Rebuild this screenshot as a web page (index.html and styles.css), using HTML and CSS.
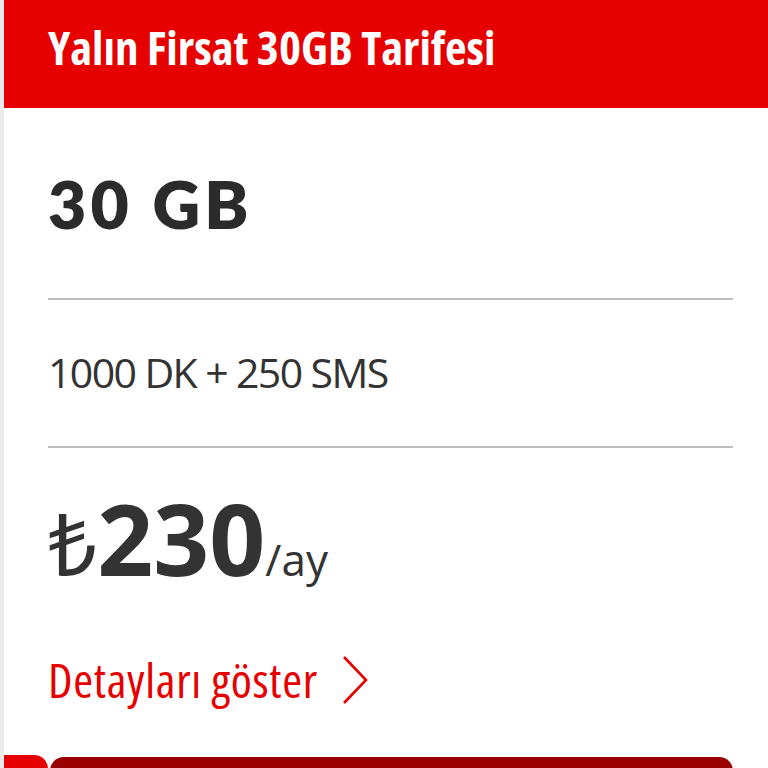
FILE: index.html
```html
<!DOCTYPE html>
<html lang="tr">
<head>
<meta charset="utf-8">
<link rel="stylesheet" href="styles.css">
</head>
<body>
<div class="page">
  <header class="head">
    <h1 class="title">Yalın Firsat 30GB Tarifesi</h1>
  </header>
  <main class="card">
    <div class="data">30 GB</div>
    <hr class="rule">
    <div class="minutes">1000 DK + 250 SMS</div>
    <hr class="rule">
    <div class="price"><span class="cur">₺</span><span class="amount">230</span><span class="per">/ay</span></div>
    <a class="details" href="#"><span>Detayları göster</span>
      <svg class="chev" width="26" height="50" viewBox="0 0 26 50"><path d="M2 2 L24 25 L2 48" fill="none" stroke="#e60000" stroke-width="2.6"/></svg>
    </a>
  </main>
  <div class="bottom">
    <div class="tab-red"></div>
    <div class="tab-dark"></div>
  </div>
</div>
</body>
</html>
```
FILE: styles.css
```css
html, body {
  margin: 0;
  padding: 0;
  background: #ffffff;
}
.page {
  width: 768px;
  height: 768px;
  overflow: hidden;
  position: relative;
  border-left: 4px solid #ebebeb;
  box-sizing: border-box;
  font-family: "Open Sans", "DejaVu Sans", sans-serif;
  color: #333333;
}
.head {
  background: #e60000;
  height: 108px;
  box-sizing: border-box;
  padding: 20px 0 0 44px;
}
.title {
  margin: 0;
  font-family: "Open Sans", sans-serif;
  font-stretch: 75%;
  font-weight: bold;
  font-size: 47px;
  line-height: 54px;
  color: #ffffff;
}
.card {
  padding: 0 35px 0 44px;
}
.data {
  font-family: "Lato", sans-serif;
  font-weight: 800;
  font-size: 66px;
  letter-spacing: 4.2px;
  line-height: 80px;
  height: 190px;
  box-sizing: border-box;
  padding-top: 56px;
  color: #2b2b2b;
}
.rule {
  margin: 0;
  border: 0;
  height: 2px;
  background: #bebebe;
}
.minutes {
  font-family: "Open Sans", sans-serif;
  font-size: 41px;
  letter-spacing: -1.6px;
  font-weight: 400;
  height: 146px;
  box-sizing: border-box;
  padding-top: 44px;
  line-height: 56px;
}
.price {
  height: 130px;
  box-sizing: border-box;
  padding-top: 40px;
  display: flex;
  align-items: baseline;
  line-height: 100px;
}
.cur {
  font-family: "Noto Sans", "DejaVu Sans", sans-serif;
  font-size: 86px;
  font-weight: 400;
}
.amount {
  font-size: 98px;
  font-weight: 700;
  margin-left: 0;
}
.per {
  font-size: 44px;
  font-weight: 400;
  margin-left: 0;
}
.details {
  display: flex;
  align-items: center;
  gap: 24px;
  text-decoration: none;
  color: #e60000;
  font-family: "Open Sans", sans-serif;
  font-size: 48px;
  font-stretch: 75%;
  letter-spacing: 0.7px;
  font-weight: 400;
  line-height: 56px;
  margin-top: 74px;
}
.bottom {
  position: absolute;
  left: -4px;
  top: 755px;
  width: 768px;
  display: flex;
  gap: 2px;
}
.tab-red {
  width: 48px;
  height: 20px;
  background: #e60000;
  border-top-right-radius: 14px;
}
.tab-dark {
  width: 683px;
  height: 20px;
  margin-top: 2px;
  background: #990000;
  border-top-left-radius: 14px;
  border-top-right-radius: 14px;
}
```
